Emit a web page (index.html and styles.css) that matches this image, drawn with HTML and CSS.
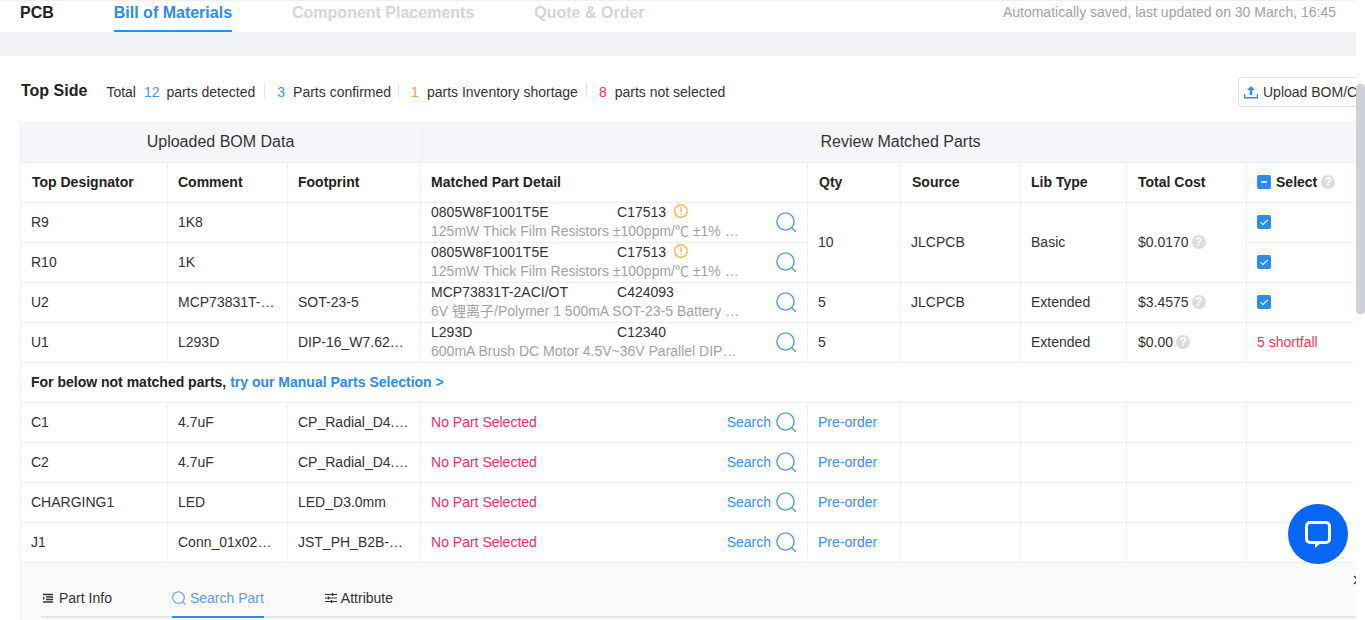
FILE: index.html
```html
<!DOCTYPE html>
<html lang="en">
<head>
<meta charset="utf-8">
<title>Bill of Materials</title>
<link rel="stylesheet" href="styles.css">
</head>
<body>
<svg class="defs" width="0" height="0" aria-hidden="true">
  <symbol id="i-search" viewBox="0 0 20 20"><circle cx="9.5" cy="9.5" r="8.6" fill="none" stroke="currentColor" stroke-width="1.4"/><path d="M15.8 15.8 20 20" fill="none" stroke="currentColor" stroke-width="1.4"/></symbol>
  <symbol id="i-warn" viewBox="0 0 14 14"><circle cx="7" cy="7" r="6.3" fill="none" stroke="currentColor" stroke-width="1.2"/><path d="M7 3.2v5" stroke="currentColor" stroke-width="1.3"/><path d="M7 9.4v1.5" stroke="currentColor" stroke-width="1.3"/></symbol>
  <symbol id="i-check" viewBox="0 0 14 14"><rect width="14" height="14" rx="2" fill="#2b8cf0"/><path d="M3.5 7.2 6 9.6l4.6-4.6" fill="none" stroke="#fff" stroke-width="1.1"/></symbol>
</svg>
<div class="page">
  <main class="main">
    <nav class="topnav">
      <span class="brand">PCB</span>
      <a class="step step-active">Bill of Materials</a>
      <a class="step">Component Placements</a>
      <a class="step">Quote &amp; Order</a>
      <span class="saved">Automatically saved, last updated on 30 March, 16:45</span>
    </nav>
    <div class="band"></div>
    <section class="panel">
      <div class="summary">
        <div class="stats">
          <h2 class="side">Top Side</h2>
          <span class="stat">Total<b class="n n-blue">12</b>parts detected</span>
          <span class="stat stat-sep"><b class="n n-first n-blue">3</b>Parts confirmed</span>
          <span class="stat stat-sep"><b class="n n-first n-orange">1</b>parts Inventory shortage</span>
          <span class="stat stat-sep"><b class="n n-first n-red">8</b>parts not selected</span>
        </div>
        <button class="upload">
          <svg class="upload-icon" viewBox="0 0 14 14"><path d="M7 1 3.2 5h2.500v5h2.600V5h2.500z" fill="#2b8cf0"/><path d="M.5 9v3.800h13V9" fill="none" stroke="#2b8cf0" stroke-width="1.500"/></svg>Upload BOM/CPL
        </button>
      </div>
      <table class="bom">
        <colgroup>
          <col class="c1"><col class="c2"><col class="c3"><col class="c4"><col class="c5"><col class="c6"><col class="c7"><col class="c8"><col class="c9">
        </colgroup>
        <thead>
          <tr class="group">
            <th colspan="3">Uploaded BOM Data</th>
            <th colspan="6">Review Matched Parts</th>
          </tr>
          <tr class="head">
            <th>Top Designator</th><th>Comment</th><th>Footprint</th><th>Matched Part Detail</th><th>Qty</th><th>Source</th><th>Lib Type</th><th>Total Cost</th>
            <th><span class="select-head"><span class="minus"></span>Select<span class="help">?</span></span></th>
          </tr>
        </thead>
        <tbody>
          <tr>
            <td>R9</td><td>1K8</td><td></td>
            <td class="part">
              <div class="part-row">
                <div class="part-text">
                  <div class="part-top"><span class="mpn">0805W8F1001T5E</span><span class="lcsc">C17513</span><svg class="warn"><use href="#i-warn"/></svg></div>
                  <div class="part-desc">125mW Thick Film Resistors ±100ppm/℃ ±1% 0805</div>
                </div>
                <svg class="search-icon"><use href="#i-search"/></svg>
              </div>
            </td>
            <td rowspan="2">10</td><td rowspan="2">JLCPCB</td><td rowspan="2">Basic</td>
            <td rowspan="2"><span class="cost">$0.0170<span class="help">?</span></span></td>
            <td><svg class="check"><use href="#i-check"/></svg></td>
          </tr>
          <tr>
            <td>R10</td><td>1K</td><td></td>
            <td class="part">
              <div class="part-row">
                <div class="part-text">
                  <div class="part-top"><span class="mpn">0805W8F1001T5E</span><span class="lcsc">C17513</span><svg class="warn"><use href="#i-warn"/></svg></div>
                  <div class="part-desc">125mW Thick Film Resistors ±100ppm/℃ ±1% 0805</div>
                </div>
                <svg class="search-icon"><use href="#i-search"/></svg>
              </div>
            </td>
            <td><svg class="check"><use href="#i-check"/></svg></td>
          </tr>
          <tr>
            <td>U2</td><td><div class="clip">MCP73831T-2ACI</div></td><td>SOT-23-5</td>
            <td class="part">
              <div class="part-row">
                <div class="part-text">
                  <div class="part-top"><span class="mpn">MCP73831T-2ACI/OT</span><span class="lcsc">C424093</span></div>
                  <div class="part-desc">6V 锂离子/Polymer 1 500mA SOT-23-5 Battery Mana</div>
                </div>
                <svg class="search-icon"><use href="#i-search"/></svg>
              </div>
            </td>
            <td>5</td><td>JLCPCB</td><td>Extended</td>
            <td><span class="cost">$3.4575<span class="help">?</span></span></td>
            <td><svg class="check"><use href="#i-check"/></svg></td>
          </tr>
          <tr>
            <td>U1</td><td>L293D</td><td><div class="clip">DIP-16_W7.62mm</div></td>
            <td class="part">
              <div class="part-row">
                <div class="part-text">
                  <div class="part-top"><span class="mpn">L293D</span><span class="lcsc">C12340</span></div>
                  <div class="part-desc">600mA Brush DC Motor 4.5V~36V Parallel DIP-16 Mo</div>
                </div>
                <svg class="search-icon"><use href="#i-search"/></svg>
              </div>
            </td>
            <td>5</td><td></td><td>Extended</td>
            <td><span class="cost">$0.00<span class="help">?</span></span></td>
            <td class="shortfall">5 shortfall</td>
          </tr>
          <tr>
            <td colspan="9" class="notice">For below not matched parts, <a class="notice-link">try our Manual Parts Selection &gt;</a></td>
          </tr>
          <tr>
            <td>C1</td><td>4.7uF</td><td><div class="clip">CP_Radial_D4.0mm</div></td>
            <td class="part"><div class="part-row"><span class="none">No Part Selected</span><a class="search">Search<svg class="search-icon"><use href="#i-search"/></svg></a></div></td>
            <td class="pre">Pre-order</td><td></td><td></td><td></td><td></td>
          </tr>
          <tr>
            <td>C2</td><td>4.7uF</td><td><div class="clip">CP_Radial_D4.0mm</div></td>
            <td class="part"><div class="part-row"><span class="none">No Part Selected</span><a class="search">Search<svg class="search-icon"><use href="#i-search"/></svg></a></div></td>
            <td class="pre">Pre-order</td><td></td><td></td><td></td><td></td>
          </tr>
          <tr>
            <td>CHARGING1</td><td>LED</td><td>LED_D3.0mm</td>
            <td class="part"><div class="part-row"><span class="none">No Part Selected</span><a class="search">Search<svg class="search-icon"><use href="#i-search"/></svg></a></div></td>
            <td class="pre">Pre-order</td><td></td><td></td><td></td><td></td>
          </tr>
          <tr>
            <td>J1</td><td><div class="clip">Conn_01x02_Male</div></td><td><div class="clip">JST_PH_B2B-PH-K</div></td>
            <td class="part"><div class="part-row"><span class="none">No Part Selected</span><a class="search">Search<svg class="search-icon"><use href="#i-search"/></svg></a></div></td>
            <td class="pre">Pre-order</td><td></td><td></td><td></td><td></td>
          </tr>
        </tbody>
      </table>
      <div class="drawer">
        <svg class="drawer-close" viewBox="0 0 10 10"><path d="M1 1l8 8M9 1 1 9" stroke="#333" stroke-width="1.300" fill="none"/></svg>
        <div class="tabs">
          <a class="tab tab-first"><svg class="tab-icon tab-icon-small" viewBox="0 0 10 10"><path d="M0 1.500h10M3 4h7M3 6.500h7M0 9h10" stroke="#333" stroke-width="1.300" fill="none"/><path d="M0 3.500v3.500l2-1.750z" fill="#333"/></svg>Part Info</a>
          <a class="tab tab-active"><svg class="tab-icon tab-icon-big" viewBox="0 0 14 14"><circle cx="6.500" cy="6.500" r="5.800" fill="none" stroke="#5b9cf0" stroke-width="1.100"/><path d="M10.700 10.700 13.500 13.500" stroke="#5b9cf0" stroke-width="1.100"/></svg>Search Part</a>
          <a class="tab tab-last"><svg class="tab-icon" viewBox="0 0 12 12"><path d="M0 2.500h12M0 6h12M0 9.500h12" stroke="#333" stroke-width="1"/><path d="M7.500 1v3M3.500 4.500v3M6.500 8v3" stroke="#333" stroke-width="1.400"/></svg>Attribute</a>
        </div>
      </div>
    </section>
  </main>
  <div class="scrollbar"><div class="thumb"></div></div>
</div>
<button class="chat" aria-label="Chat">
  <svg class="chat-icon" viewBox="0 0 28 28"><path d="M6 2.500h16A3.500 3.500 0 0 1 25.500 6v13a3.500 3.500 0 0 1-3.500 3.500H6A3.500 3.500 0 0 1 2.500 19V6A3.500 3.500 0 0 1 6 2.500z" fill="none" stroke="#fff" stroke-width="3"/><path d="M11 22v6l7-6z" fill="#fff"/></svg>
</button>
</body>
</html>
```
FILE: styles.css
```css
* { box-sizing: border-box; }
html, body { margin: 0; height: 100%; overflow: hidden; }
body {
  font-family: "Liberation Sans", "Noto Sans CJK SC", Arial, sans-serif;
  font-size: 14px;
  color: #333;
  background: #fff;
}
.defs { display: block; height: 0; }
.page { display: flex; width: 1365px; height: 620px; overflow: hidden; }
.main { width: 1356px; flex: none; overflow: hidden; }
.scrollbar { width: 9px; flex: none; padding-top: 84px; }
.thumb { height: 230px; background: #ced1d8; border-radius: 4px; }

.topnav {
  display: flex; align-items: flex-start; gap: 60px;
  height: 32px; padding: 0 20px;
  border-top: 1px solid #eff0f3;
  line-height: 23px;
}
.brand { font-size: 16px; font-weight: 700; color: #222; }
.step { font-size: 16px; font-weight: 700; color: #d3d5d9; height: 31px; }
.step-active { color: #2b8cf0; border-bottom: 2px solid #2b8cf0; }
.saved { margin-left: auto; color: #a0a2a7; }
.band { height: 24px; background: #f1f2f6; }

.panel { padding-left: 20px; width: 1356px; }
.summary { display: flex; align-items: center; height: 66px; padding-top: 6px; }
.stats { display: flex; align-items: center; width: 1218px; flex: none; white-space: nowrap; }
.side { margin: 0 19px 2px 1px; font-size: 16px; font-weight: 700; color: #222; line-height: 18px; }
.stat { color: #333; position: relative; }
.stat-sep { margin-left: 21px; }
.stat-sep:nth-child(3) { margin-left: 22px; }
.stat-sep:nth-child(4) { margin-left: 20px; }
.stat-sep::before {
  content: ""; position: absolute; left: -13px; top: -1px;
  width: 1px; height: 15px; background: #e4e5e9;
}
.n { font-weight: 400; margin: 0 7px 0 8px; }
.n-first { margin: 0 8px 0 0; }
.n-blue { color: #4c8ff0; }
.n-orange { color: #f7a04b; }
.n-red { color: #f2305f; }
.upload {
  flex: none; display: flex; align-items: center; gap: 5px;
  height: 30px; width: 140px; padding: 0 5px;
  background: #fff; border: 1px solid #dfe1e6; border-radius: 4px;
  font: inherit; color: #333; white-space: nowrap;
}
.upload-icon { width: 14px; height: 14px; flex: none; }

.bom { border-collapse: collapse; table-layout: fixed; width: 1360px; }
.c1 { width: 147px; } .c2 { width: 120px; } .c3 { width: 133px; } .c4 { width: 387px; }
.c5 { width: 93px; } .c6 { width: 120px; } .c7 { width: 106px; } .c8 { width: 120px; } .c9 { width: 134px; }
.bom th, .bom td { border: 1px solid #eeeff2; height: 40px; padding: 0 10px 2px; text-align: left; white-space: nowrap; overflow: hidden; }
.bom .group th { background: #f5f6fa; font-size: 16px; font-weight: 400; text-align: center; color: #333; }
.bom .head th { font-weight: 700; color: #222; }
.bom .head th:nth-child(1), .bom .head th:nth-child(5), .bom .head th:nth-child(6), .bom .head th:nth-child(8) { padding-left: 11px; }
.clip { overflow: hidden; text-overflow: ellipsis; }

.part-row { display: flex; align-items: center; justify-content: space-between; height: 36px; padding-right: 1px; }
.part-text { width: 309px; line-height: 19px; }
.part-top { display: flex; align-items: center; color: #333; }
.mpn { width: 186px; flex: none; }
.warn { width: 14px; height: 14px; color: #f8b336; margin: -2px 0 0 8px; }
.part-desc { color: #a0a2a7; overflow: hidden; text-overflow: ellipsis; }
.search-icon { width: 20px; height: 20px; color: #4a97ea; flex: none; }
.search { display: flex; align-items: center; gap: 5px; color: #3b8fee; }
.none { color: #ee2f6c; }
.pre { color: #3b8fee; }
.shortfall { color: #ee3a55; }
.notice { font-weight: 700; color: #222; }
.notice-link { color: #2b8cf0; }

.check { display: block; width: 14px; height: 14px; }
.select-head { display: flex; align-items: center; }
.minus { width: 14px; height: 14px; margin-right: 5px; border-radius: 2px; background: #2b8cf0; position: relative; }
.minus::after { content: ""; position: absolute; left: 4px; top: 6px; width: 6px; height: 2px; background: #cfe4fb; }
.help {
  display: inline-block; width: 14px; height: 14px; margin-left: 4px;
  border-radius: 50%; background: #dcdcdc; color: #fff;
  font-size: 12px; font-weight: 700; line-height: 14px; text-align: center;
}
.cost { display: inline-flex; align-items: center; margin-left: 1px; }
.cost .help { margin-left: 3px; }

.drawer { position: relative; height: 58px; background: #fafafa; border-left: 1px solid #eeeff2; padding: 18px 0 0 20px; width: 1340px; }
.drawer-close { position: absolute; left: 1332px; top: 12px; width: 10px; height: 10px; }
.tabs { display: flex; gap: 60px; height: 37px; border-bottom: 2px solid #e4e7ed; }
.tab { display: flex; align-items: center; height: 37px; padding-bottom: 4px; color: #333; }
.tab-first { padding-left: 2px; }
.tab-last { margin-left: 1px; }
.tab-active { color: #5b9cf0; border-bottom: 2px solid #2b8cf0; padding-bottom: 2px; }
.tab-icon { width: 12px; height: 12px; margin-right: 4px; }
.tab-icon-small { width: 10px; height: 10px; margin-right: 6px; }
.tab-icon-big { width: 14px; height: 14px; }

.chat {
  position: fixed; left: 1288px; top: 504px;
  width: 60px; height: 60px; padding: 0; border: 0; border-radius: 50%;
  background: #0866f5; display: flex; align-items: center; justify-content: center;
}
.chat-icon { width: 28px; height: 28px; }
```
